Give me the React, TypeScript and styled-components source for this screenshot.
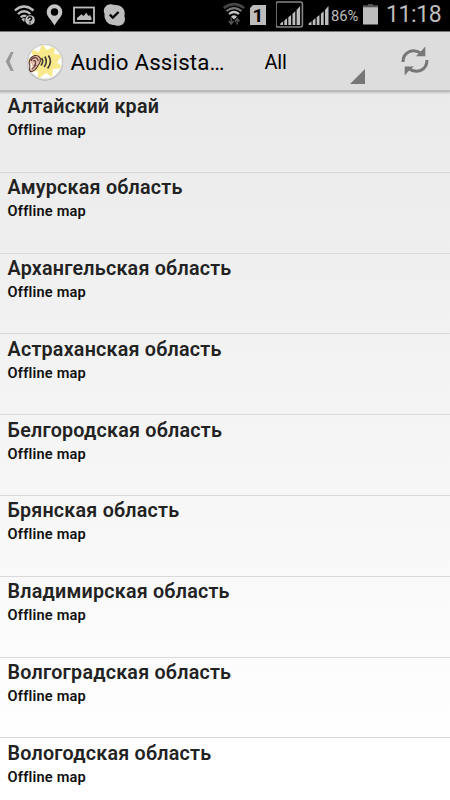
import React from "react";
import styled, { createGlobalStyle } from "styled-components";

const GlobalStyle = createGlobalStyle`
  * { box-sizing: border-box; }
  body { margin: 0; background: #fff; font-family: Roboto, "Noto Sans", sans-serif; }
`;

const Screen = styled.div`
  width: 450px;
  height: 800px;
  overflow: hidden;
  display: flex;
  flex-direction: column;
  background: linear-gradient(#e8e8e8 31px, #ffffff 760px);
`;

const StatusBar = styled.div`
  flex: none;
  height: 31px;
  background: #000;
  color: #bdbdbd;
  display: flex;
  padding: 0 9px 0 14px;
  justify-content: space-between;
`;

const IconGroup = styled.div`
  display: flex;
  height: 31px;
`;

const Glyph = styled.svg<{ $gap?: number }>`
  display: block;
  flex: none;
  margin-right: ${(p) => p.$gap ?? 0}px;
`;

const Percent = styled.span`
  width: 32px;
  font-size: 14.8px;
  line-height: 32px;
  letter-spacing: -0.1px;
  white-space: nowrap;
`;

const Clock = styled.span`
  width: 55px;
  font-size: 23px;
  line-height: 30px;
  letter-spacing: -0.4px;
  white-space: nowrap;
`;

const ActionBar = styled.header`
  flex: none;
  height: 61px;
  display: flex;
  align-items: center;
  background: #dddddd;
  border-top: 1px solid #777;
  border-bottom: 2px solid #bcbcbc;
  box-shadow: 0 1px 2px rgba(0, 0, 0, 0.18);
  padding-left: 5px;
`;

const BarTitle = styled.h1`
  margin: 0;
  padding: 2px 0 0 0.4px;
  width: 194px;
  font-size: 22.3px;
  font-weight: 400;
  line-height: 58px;
  letter-spacing: 0.18px;
  color: #000;
  white-space: nowrap;
`;

const Spinner = styled.div`
  width: 101px;
  height: 58px;
  display: flex;
  justify-content: space-between;
  align-items: center;
  font-size: 20px;
  letter-spacing: -0.2px;
  color: #000;
`;

const SpinnerLabel = styled.span`
  padding: 2px 0 0 0.4px;
`;

const SpinnerArrow = styled.svg`
  align-self: flex-end;
  margin-bottom: 6px;
`;

const RefreshSlot = styled.div`
  padding-left: 35px;
`;

const List = styled.ul`
  margin: 0;
  padding: 0;
  list-style: none;
`;

const Row = styled.li`
  height: 80.8px;
  padding: 4.4px 8px 0 7.6px;
  border-bottom: 1px solid #dadada;
`;

const RowTitle = styled.div`
  font-size: 19.7px;
  font-weight: 600;
  line-height: 22px;
  letter-spacing: 0.22px;
  color: #222;
  white-space: nowrap;
`;

const RowNote = styled.div`
  font-size: 14.6px;
  font-weight: 600;
  line-height: 24px;
  letter-spacing: 0.18px;
  color: #111;
  white-space: nowrap;
`;

const regions = [
  "Алтайский край",
  "Амурская область",
  "Архангельская область",
  "Астраханская область",
  "Белгородская область",
  "Брянская область",
  "Владимирская область",
  "Волгоградская область",
  "Вологодская область",
];

const WifiQuestion = () => (
  <Glyph width="21" height="31" $gap={11} fill="none" stroke="#bdbdbd">
    <path d="M.8 10.5Q10 2.5 19.5 10.5M4 14Q10 8.5 16.4 14M6.8 17.4Q10 14.3 13 17" strokeWidth="2.3" />
    <path d="M7.5 19.2Q10 17 12 19L10 22z" fill="#bdbdbd" stroke="none" />
    <circle cx="16" cy="20" r="5.2" fill="#bdbdbd" stroke="#000" strokeWidth=".7" />
    <path d="M14.2 18.8Q14.3 17 16 17T17.8 18.7Q17.7 19.6 16 20.6V21.3M16 22.2V23.5" stroke="#111" strokeWidth="1.4" />
  </Glyph>
);

const Pin = () => (
  <Glyph width="17" height="31" $gap={10}>
    <path fillRule="evenodd" fill="#c6c6c6" d="M8.5 4.3A7.8 7.8 0 0 1 16.3 12C16.3 16.5 11.8 19.5 8.5 25.5C5.2 19.5.7 16.5.7 12A7.8 7.8 0 0 1 8.5 4.3ZM8.5 8.3A3.7 3.7 0 1 0 8.5 15.7A3.7 3.7 0 1 0 8.5 8.3Z" />
  </Glyph>
);

const Picture = () => (
  <Glyph width="22" height="31" $gap={8}>
    <rect x="1" y="7.5" width="20" height="15.3" fill="none" stroke="#bdbdbd" strokeWidth="1.8" />
    <path d="M4 20V18L8.5 14.3L10.5 16L13.3 12.8L15.5 16L17 15L18.5 18V20Z" fill="#bdbdbd" />
  </Glyph>
);

const SkypeCheck = () => (
  <Glyph width="23" height="31">
    <path d="M7.5 4.2C10 4 11 5 13 5C19 5 23 10 21.4 16C22.8 20 21.5 25.5 15.5 25.8C13 25.8 12 25 10 25C4 24.5 .8 19 1.6 14C-.6 10 2 4.3 7.5 4.2Z" fill="#bdbdbd" />
    <path d="M6.8 14.7L9.8 17.6L15.6 12" fill="none" stroke="#000" strokeWidth="2.3" />
  </Glyph>
);

const WifiTraffic = () => (
  <Glyph width="22" height="31" $gap={5} fill="none">
    <path d="M.8 8Q11 .2 21.2 8" stroke="#454545" strokeWidth="2.5" />
    <path d="M3.5 11Q11 5.2 18.5 11" stroke="#777" strokeWidth="2.2" />
    <path d="M6 14Q11 10 16 14" stroke="#c4c4c4" strokeWidth="2.2" />
    <path d="M8 16.4Q11 14 14 16.4L11 19.5Z" fill="#c4c4c4" />
    <path d="M8.2 17.5V23.5M5.8 21L8.2 24L10.5 21M14.2 24.5V19M11.8 21.5L14.2 18.5L16.5 21.5" stroke="#555" strokeWidth="1.4" />
  </Glyph>
);

const SimNumber = styled.span`
  width: 16px;
  height: 20px;
  margin: 5px 10px 0 0;
  background: #bdbdbd;
  clip-path: polygon(3px 0, 100% 0, 100% 100%, 0 100%, 0 3px);
  color: #000;
  font-size: 19px;
  font-weight: 700;
  line-height: 21px;
  text-align: center;
`;

const bars = "M1 18.5L3.8 16.3V20H1ZM5 15.6L7.8 13.3V20H5ZM9 12.3L11.8 10V20H9ZM13.2 8.8L16 6.3V20H13.2ZM17.3 5.2L20.8 1.2V20H17.3Z";

const BoxedSignal = () => (
  <Glyph width="28" height="31" $gap={4}>
    <rect x="0" y="2" width="26.4" height="25" rx="2" fill="none" stroke="#858585" strokeWidth="1.6" />
    <path transform="translate(3.3 4.9)" d={bars} fill="#bdbdbd" />
  </Glyph>
);

const Signal = () => (
  <Glyph width="22" height="31" $gap={1}>
    <path transform="translate(-.3 4.9)" d={bars} fill="#bdbdbd" />
  </Glyph>
);

const Battery = () => (
  <Glyph width="15" height="31" $gap={8}>
    <path d="M5 4H10V5.3H15V8H0V5.3H5Z" fill="#555" />
    <rect y="7.3" width="15" height="17.2" fill="#bdbdbd" />
  </Glyph>
);

const BackChevron = () => (
  <Glyph width="10" height="24" $gap={11}>
    <path d="M5.7 3H8.7L4.6 12.5L8.7 22H5.7L.7 12.5Z" fill="#999" />
  </Glyph>
);

const AppLogo = () => (
  <Glyph width="38" height="40" $gap={6}>
    <defs>
      <radialGradient id="disc">
        <stop offset=".88" stopColor="#fffffa" />
        <stop offset="1" stopColor="#c4c4c4" />
      </radialGradient>
      <clipPath id="discClip">
        <circle cx="19" cy="21" r="17" />
      </clipPath>
    </defs>
    <circle cx="19" cy="21.5" r="18.2" fill="#b5b5b5" />
    <circle cx="19" cy="21" r="18" fill="url(#disc)" />
    <path clipPath="url(#discClip)" d="M5 8L13 11L16 3L21 9L29 5L28 13L37 14L31 21L37 27L27 28L26 36L20 32L12 38L12 30L3 31L7 24L1 19L7 16Z" fill="#f8ea8c" />
    <path d="M4.5 30.5C2 28.5 5 26 3.5 24C2 20 5 15 9 14.5C14 14 16 18 13 23C11 26 10 30.5 4.5 30.5Z" fill="#e2bcae" stroke="#50302b" strokeWidth="1.1" />
    <path d="M5 20C6 16 12 15 12 20M7 20C10 18 10.5 23 8 25M6 28L10 24" fill="none" stroke="#643d38" strokeWidth="1.2" />
    <path d="M4.5 21L7 26L4.5 28Z" fill="#fff3e8" />
    <path d="M15.6 17Q18 20.5 15 24.5M18.8 15.5Q22 20.5 18.2 26M22.4 14.5Q26.8 20.5 21.6 27.5" fill="none" stroke="#3c382f" strokeWidth="1.6" />
  </Glyph>
);

const Refresh = () => (
  <Glyph width="30" height="32">
    <g fill="none" stroke="#777" strokeWidth="3">
      <path d="M3 17C3 6.8 13.5 2.2 22 9" />
      <path d="M27 15C27 25.2 16.5 29.8 8 23" />
    </g>
    <path d="M25.3 1.5V11.3H15.8L19.3 8L22 5.2ZM4.7 30.5V21.5H14.2L10.7 24L8 26.8Z" fill="#777" />
  </Glyph>
);

export default function App() {
  return (
    <Screen>
      <GlobalStyle />
      <StatusBar>
        <IconGroup>
          <WifiQuestion />
          <Pin />
          <Picture />
          <SkypeCheck />
        </IconGroup>
        <IconGroup>
          <WifiTraffic />
          <SimNumber>1</SimNumber>
          <BoxedSignal />
          <Signal />
          <Percent>86%</Percent>
          <Battery />
          <Clock>11:18</Clock>
        </IconGroup>
      </StatusBar>
      <ActionBar>
        <BackChevron />
        <AppLogo />
        <BarTitle>Audio Assista…</BarTitle>
        <Spinner>
          <SpinnerLabel>All</SpinnerLabel>
          <SpinnerArrow width="15" height="15">
            <path d="M15 0V15H0Z" fill="#777" />
          </SpinnerArrow>
        </Spinner>
        <RefreshSlot>
          <Refresh />
        </RefreshSlot>
      </ActionBar>
      <List>
        {regions.map((name) => (
          <Row key={name}>
            <RowTitle>{name}</RowTitle>
            <RowNote>Offline map</RowNote>
          </Row>
        ))}
      </List>
    </Screen>
  );
}
